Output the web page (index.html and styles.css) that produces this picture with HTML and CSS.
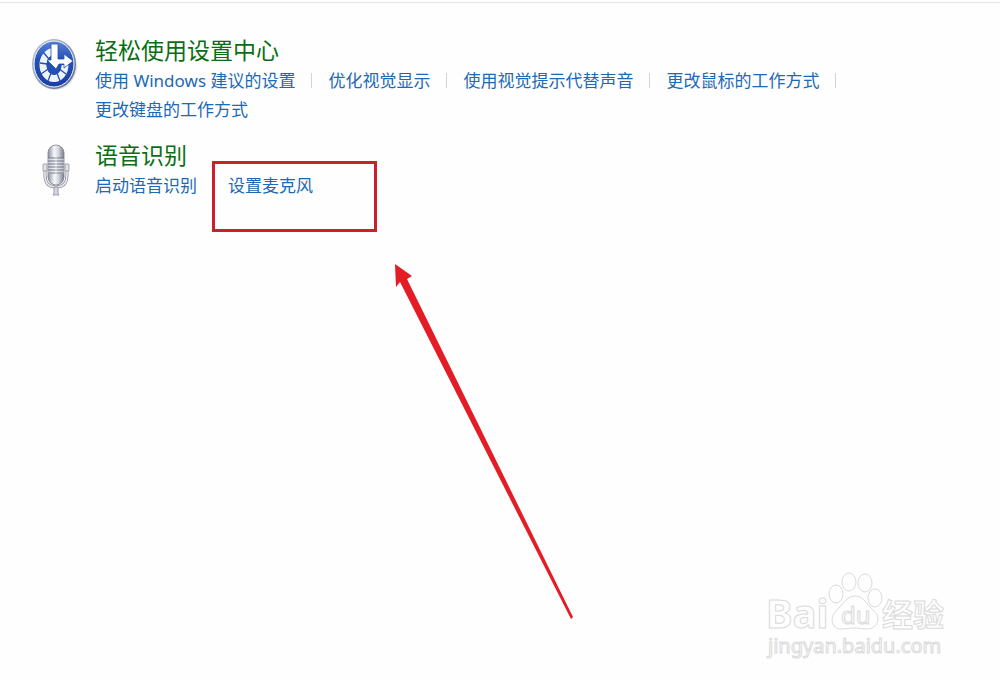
FILE: index.html
```html
<!DOCTYPE html>
<html lang="zh-CN">
<head>
  <meta charset="UTF-8">
  <meta name="viewport" content="width=device-width, initial-scale=1.0">
  <title>轻松使用</title>
  <link rel="stylesheet" href="styles.css">
</head>
<body>
  <main class="panel">
    <section class="category">
      <svg class="category-icon" viewBox="0 0 48 56" aria-hidden="true">
        <defs>
          <linearGradient id="blue" x1="0" y1="0" x2="0" y2="1">
            <stop offset="0" stop-color="#5a83d8"/>
            <stop offset="0.4" stop-color="#2450b4"/>
            <stop offset="1" stop-color="#1c3fa4"/>
          </linearGradient>
          <linearGradient id="rim" x1="0" y1="0" x2="1" y2="1">
            <stop offset="0" stop-color="#c4ccdc"/>
            <stop offset="0.5" stop-color="#8d9bb8"/>
            <stop offset="1" stop-color="#4d5b80"/>
          </linearGradient>
        </defs>
        <ellipse cx="25" cy="31" rx="22" ry="24" fill="#dcdfe6"/>
        <ellipse cx="24" cy="29" rx="22" ry="25" fill="url(#rim)"/>
        <ellipse cx="24" cy="29" rx="20" ry="23" fill="url(#blue)" stroke="#f2f5fb" stroke-width="1"/>
        <path d="M24 16.500A11 13.500 0 1 0 35 30" fill="none" stroke="#eef3fc" stroke-width="7"/>
        <path d="M24 30L10 28M24 30L13 17M24 30L11 39M24 30L18 46M24 30L30 46M24 30L36 39" stroke="#2450b4" stroke-width="1.3"/>
        <ellipse cx="24" cy="30" rx="7.500" ry="10" fill="#2450b4"/>
        <path d="M28 24H34V19L43 26L34 33V29H29L26 34L17 25H21V9H28Z" fill="#fff" stroke="#2450b4" stroke-width="0.8"/>
      </svg>
      <div class="category-body">
        <h2><a href="#ease">轻松使用设置中心</a></h2>
        <ul class="links">
          <li><a href="#suggest">使用 Windows 建议的设置</a></li>
          <li><a href="#visual">优化视觉显示</a></li>
          <li><a href="#sound">使用视觉提示代替声音</a></li>
          <li><a href="#mouse">更改鼠标的工作方式</a></li>
          <li><a href="#keyboard">更改键盘的工作方式</a></li>
        </ul>
      </div>
    </section>

    <section class="category">
      <svg class="category-icon" viewBox="0 0 48 56" aria-hidden="true">
        <defs>
          <linearGradient id="metal" x1="0" y1="0" x2="1" y2="0">
            <stop offset="0" stop-color="#8b8f9e"/>
            <stop offset="0.4" stop-color="#f8f9fb"/>
            <stop offset="0.65" stop-color="#d3d6de"/>
            <stop offset="1" stop-color="#777b8a"/>
          </linearGradient>
        </defs>
        <path d="M15 25V35Q15 47 26 47Q37 47 37 35V25" fill="none" stroke="#8b8e9a" stroke-width="3"/>
        <path d="M15 25V35Q15 47 26 47Q37 47 37 35V25" fill="none" stroke="#e8e9ed" stroke-width="1.6"/>
        <path d="M24 47H28V53L29 55H23L24 53Z" fill="#d6d7de" stroke="#8b8e9a" stroke-width="0.8"/>
        <rect x="18" y="5" width="16" height="40" rx="8" fill="url(#metal)" stroke="#7e8290" stroke-width="0.8"/>
        <path d="M18 18H34V34H18Z" fill="#f0f1f5" fill-opacity="0.5"/>
        <path d="M18 18H34M18 21H34M18 24H34M18 27H34M18 30H34M18 33H34" stroke="#717584" stroke-width="1"/>
        <path d="M26 17V34" stroke="#e9eaf0" stroke-width="1"/>
        <path d="M13 24H17V31H13ZM35 24H39V31H35Z" fill="#e0e1e7" stroke="#8b8e9a" stroke-width="0.7"/>
      </svg>
      <div class="category-body">
        <h2><a href="#speech">语音识别</a></h2>
        <ul class="links plain">
          <li><a href="#start">启动语音识别</a></li>
          <li class="marked"><a href="#mic">设置麦克风</a></li>
        </ul>
      </div>
    </section>
  </main>

  <svg class="arrow" viewBox="0 0 180 356" aria-hidden="true">
    <path d="M0 0L17 12L12 15L178 353L176 355L5 18L1 23Z" fill="#e31c25"/>
  </svg>

  <svg class="watermark" viewBox="0 0 190 96" role="img" aria-label="Baidu 经验">
    <g class="outline">
      <ellipse cx="71" cy="25" rx="7" ry="9"/>
      <ellipse cx="84" cy="13" rx="7" ry="9"/>
      <ellipse cx="100" cy="14" rx="7" ry="9"/>
      <ellipse cx="110" cy="29" rx="7" ry="9"/>
      <path d="M90 27C99 27 102 36 109 42C117 49 112 60 102 60C96 60 94 59 90 59C85 59 82 60 76 60C67 60 64 49 71 42C78 36 81 27 90 27Z"/>
      <text class="brand" x="1" y="59">Bai</text>
      <text class="paw-text" x="76" y="55">du</text>
      <text class="brand-cn" x="117" y="57">经验</text>
      <text class="site" x="3" y="84">jingyan.baidu.com</text>
    </g>
  </svg>
</body>
</html>
```

FILE: styles.css
```css
* {
  box-sizing: border-box;
}

body {
  position: relative;
  min-height: 100vh;
  margin: 0;
  padding-top: 2px;
  background-color: #fefefe;
  font-family: "Noto Sans", "Noto Sans CJK SC", sans-serif;
  font-size: 17px;
  line-height: 29px;
}

a {
  color: #1c69b5;
  text-decoration: none;
}

a:hover {
  text-decoration: underline;
}

.panel {
  display: flex;
  flex-direction: column;
  gap: 16px;
  padding: 32px 96px 0 30px;
  border-top: 1px solid #e4e4e8;
}

.category {
  display: flex;
  gap: 17px;
}

.category-icon {
  flex: none;
  width: 48px;
  height: 56px;
}

h2 {
  margin: 0;
  font-size: 23px;
  font-weight: 400;
  line-height: 31px;
}

h2 a {
  color: #0b6e14;
}

.links {
  display: flex;
  flex-wrap: wrap;
  margin: 0;
  padding: 0;
  list-style: none;
}

.links li {
  position: relative;
  display: flex;
  align-items: center;
}

.links li:not(:last-child)::after {
  content: "";
  width: 1px;
  height: 15px;
  margin: 0 16px;
  background-color: #d0d4da;
}

.links.plain li:not(:last-child)::after {
  margin: 0 15px;
  background-color: transparent;
}

.marked::before {
  content: "";
  position: absolute;
  top: -10px;
  left: -16px;
  box-sizing: border-box;
  width: 165px;
  height: 71px;
  border: 3px solid #c9212b;
}

.arrow {
  position: absolute;
  top: 264px;
  left: 395px;
  width: 180px;
  height: 356px;
}

.watermark {
  position: absolute;
  right: 45px;
  bottom: 15px;
  width: 190px;
  height: 96px;
}

.outline {
  fill: #fefefe;
  stroke: #dadada;
  stroke-width: 1px;
}

.outline text {
  font-family: "Noto Sans", "Noto Sans CJK SC", sans-serif;
}

.outline .brand {
  font-size: 40px;
  font-weight: 700;
}

.outline .paw-text {
  font-size: 24px;
}

.outline .brand-cn {
  font-size: 31px;
  font-weight: 700;
}

.outline .site {
  font-size: 20px;
}
```
